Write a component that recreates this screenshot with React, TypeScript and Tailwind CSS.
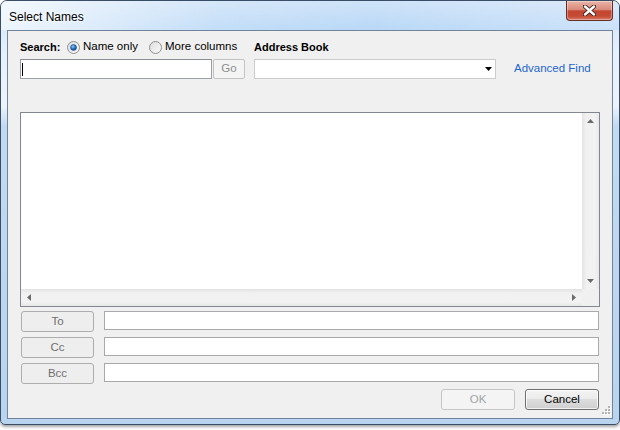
import React from "react";

const font = "font-['Liberation_Sans',Arial,sans-serif]";

function Radio({ checked }: { checked?: boolean }) {
  return (
    <svg width="13" height="13" viewBox="0 0 13 13" aria-hidden className="shrink-0">
      <defs>
        <linearGradient id={checked ? "rOn" : "rOff"} x1="0" y1="0" x2="1" y2="1">
          <stop offset="0" stopColor="#dcdcdc" />
          <stop offset="1" stopColor="#fbfbfb" />
        </linearGradient>
        <radialGradient id="dot" cx="0.4" cy="0.35" r="0.7">
          <stop offset="0" stopColor="#8fd0ff" />
          <stop offset="0.5" stopColor="#2b77c9" />
          <stop offset="1" stopColor="#0f3f86" />
        </radialGradient>
      </defs>
      <circle cx="6.5" cy="6.5" r="6" fill={`url(#${checked ? "rOn" : "rOff"})`} stroke="#8e8f8f" />
      {checked && <circle cx="6.5" cy="6.5" r="3" fill="url(#dot)" stroke="#17407a" strokeWidth="0.5" />}
    </svg>
  );
}

function Arrow({ dir, color = "#6b6b6b" }: { dir: "up" | "down" | "left" | "right"; color?: string }) {
  const pts = {
    up: "0,4 3.5,0 7,4",
    down: "0,0 7,0 3.5,4",
    left: "4,0 4,7 0,3.5",
    right: "0,0 4,3.5 0,7",
  }[dir];
  const vertical = dir === "up" || dir === "down";
  return (
    <svg width={vertical ? 7 : 4} height={vertical ? 4 : 7} aria-hidden>
      <polygon points={pts} fill={color} />
    </svg>
  );
}

function SoftButton({ label, w, dim }: { label: string; w: string; dim?: boolean }) {
  return (
    <div
      className={`${w} h-[21px] shrink-0 flex items-center justify-center rounded-[3px] border ${
        dim ? "border-[#c6c6c6] bg-[#f4f4f4] text-[#a3a3a3]" : "border-[#adadad] bg-[#eeeeee] text-[#6e6e6e]"
      } text-[11.5px]`}
    >
      {label}
    </div>
  );
}

function RecipientRow({ label }: { label: string }) {
  return (
    <div className="flex items-start">
      <div className="ml-[1px]">
        <SoftButton label={label} w="w-[73px]" />
      </div>
      <div className="ml-[10px] mr-[1px] h-[19px] flex-1 border border-[#a9a9a9] bg-white" />
    </div>
  );
}

export default function App() {
  return (
    <div className={`w-[620px] h-[430px] bg-white ${font} text-black`}>
      <div className="relative flex h-[425px] w-[620px] flex-col rounded-t-[7px] rounded-b-[5px] border border-[#3a4d66] bg-[linear-gradient(180deg,#cfe2f6_0px,#e6f0fb_50px,#edf3fb_105px,#c2daf1_125px,#b9d4ef_100%)] px-[6px] pb-[5px] shadow-[0_2px_3px_rgba(0,0,0,0.35)]">
        {/* title bar */}
        <div className="-mx-[6px] flex h-[29px] shrink-0 items-center rounded-t-[6px] bg-[linear-gradient(90deg,rgba(255,255,255,0.75)_0%,rgba(255,255,255,0.15)_35%,rgba(255,255,255,0)_60%,rgba(255,255,255,0.25)_100%),linear-gradient(180deg,#cfe3f8,#b9d8f7)] pl-[8px] pt-[3px]">
          <span className="text-[12px] [text-shadow:0_0_6px_#fff,0_0_3px_#fff]">Select Names</span>
        </div>

        {/* close button */}
        <div className="absolute right-[6px] top-0 flex h-[20px] w-[47px] items-center justify-center rounded-b-[4px] border border-t-0 border-[#6a2c22] bg-[linear-gradient(180deg,#eab5a8_0%,#d98a7b_45%,#c3452f_52%,#c54b36_80%,#d97b66_100%)] shadow-[inset_0_0_0_1px_rgba(255,255,255,0.35)]">
          <svg width="13" height="11" viewBox="0 0 13 11" aria-hidden>
            <path d="M2 1.5 L11 9.5 M11 1.5 L2 9.5" stroke="#3b1d18" strokeWidth="4.2" strokeLinecap="round" />
            <path d="M2 1.5 L11 9.5 M11 1.5 L2 9.5" stroke="#ffffff" strokeWidth="2.4" strokeLinecap="round" />
          </svg>
        </div>

        {/* client area */}
        <div className="relative flex flex-1 flex-col border border-[#72849c] bg-[#f0f0f0] pl-[12px] pr-[12px] pt-[8px]">
          {/* search row */}
          <div className="flex h-[16px] items-center text-[11.5px]">
            <span className="w-[47px] shrink-0 text-[11px] font-bold">Search:</span>
            <div className="flex w-[82px] shrink-0 items-center gap-[3px]">
              <Radio checked />
              <span>Name only</span>
            </div>
            <div className="flex w-[105px] shrink-0 items-center gap-[3px]">
              <Radio />
              <span>More columns</span>
            </div>
            <span className="text-[11px] font-bold">Address Book</span>
          </div>

          {/* inputs row */}
          <div className="mt-[4px] flex h-[20px] items-center">
            <div className="flex h-[20px] w-[192px] shrink-0 items-center border border-[#9c9fa6] border-t-[#8a8d94] bg-white pl-[1px]">
              <span className="h-[13px] w-[1px] bg-black" />
            </div>
            <div className="ml-[1px] flex h-[20px] w-[32px] shrink-0 items-center justify-center rounded-[2px] border border-[#c3c3c3] bg-[#f4f4f4] text-[11.5px] text-[#8e8e8e]">
              Go
            </div>
            <div className="ml-[9px] flex h-[20px] w-[242px] shrink-0 items-center justify-end border border-[#cccccc] bg-white pr-[3px]">
              <Arrow dir="down" color="#000000" />
            </div>
            <span className="ml-[18px] text-[11.5px] text-[#1f66cc]">Advanced Find</span>
          </div>

          {/* results list */}
          <div className="mt-[33px] flex h-[195px] shrink-0 flex-col border border-[#828790] bg-white">
            <div className="flex flex-1">
              <div className="flex-1" />
              <div className="flex w-[17px] flex-col items-center justify-between bg-[linear-gradient(90deg,#e3e3e3,#f1f1f1_25%,#f2f2f2_75%,#e8e8e8)] py-[6px]">
                <Arrow dir="up" />
                <Arrow dir="down" />
              </div>
            </div>
            <div className="flex h-[17px] shrink-0">
              <div className="flex flex-1 items-center justify-between bg-[linear-gradient(180deg,#e3e3e3,#f1f1f1_25%,#f2f2f2_75%,#e8e8e8)] px-[6px]">
                <Arrow dir="left" />
                <Arrow dir="right" />
              </div>
              <div className="w-[17px] bg-[#f0f0f0]" />
            </div>
          </div>

          {/* recipients */}
          <div className="mt-[4px] flex flex-col gap-[5px]">
            <RecipientRow label="To" />
            <RecipientRow label="Cc" />
            <RecipientRow label="Bcc" />
          </div>

          {/* buttons */}
          <div className="mr-[1px] mt-[5px] flex justify-end gap-[10px]">
            <SoftButton label="OK" w="w-[74px]" dim />
            <div className="flex h-[21px] w-[74px] items-center justify-center rounded-[3px] border border-[#707070] bg-[linear-gradient(180deg,#f3f3f3_0%,#ebebeb_50%,#dddddd_50%,#cfcfcf_100%)] text-[11.5px] shadow-[inset_0_0_0_1px_rgba(255,255,255,0.7)]">
              Cancel
            </div>
          </div>

          {/* size grip */}
          <svg className="absolute bottom-[3px] right-[1px]" width="10" height="10" viewBox="0 0 10 10" aria-hidden>
            {[
              [7, 1],
              [4, 4],
              [7, 4],
              [1, 7],
              [4, 7],
              [7, 7],
            ].map(([x, y]) => (
              <g key={`${x}-${y}`}>
                <rect x={x + 1} y={y + 1} width="2" height="2" fill="#ffffff" />
                <rect x={x} y={y} width="2" height="2" fill="#b4b4b4" />
              </g>
            ))}
          </svg>
        </div>
      </div>
    </div>
  );
}
